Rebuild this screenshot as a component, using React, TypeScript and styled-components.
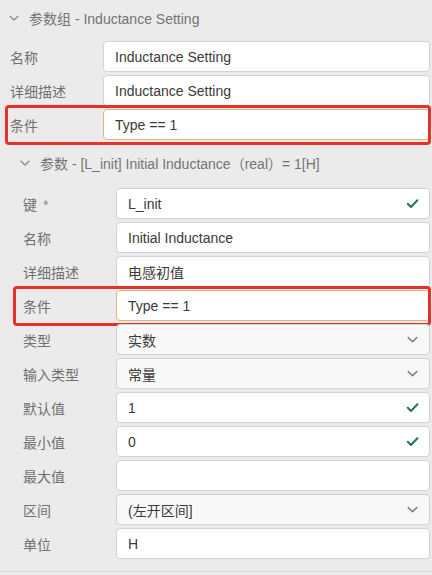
import React from "react";
import styled, { createGlobalStyle } from "styled-components";

/** Types */
type Field = {
  /** Label shown on the left. */
  label: string;
  /** Value in the box. */
  value: string;
  /** Marks the label as required. */
  required?: boolean;
  /** Box kind. */
  kind?: "text" | "select" | "valid";
  /** Draws the red review frame round the row. */
  flagged?: boolean;
  /** Input focused with warning border. */
  warn?: boolean;
};

const groupFields: Field[] = [
  { label: "名称", value: "Inductance Setting" },
  { label: "详细描述", value: "Inductance Setting" },
  { label: "条件", value: "Type == 1", flagged: true, warn: true },
];

const paramFields: Field[] = [
  { label: "键", value: "L_init", required: true, kind: "valid" },
  { label: "名称", value: "Initial Inductance" },
  { label: "详细描述", value: "电感初值" },
  { label: "条件", value: "Type == 1", flagged: true, warn: true },
  { label: "类型", value: "实数", kind: "select" },
  { label: "输入类型", value: "常量", kind: "select" },
  { label: "默认值", value: "1", kind: "valid" },
  { label: "最小值", value: "0", kind: "valid" },
  { label: "最大值", value: "" },
  { label: "区间", value: "(左开区间]", kind: "select" },
  { label: "单位", value: "H" },
];

/** Icons */
const Chevron = ({ color = "#8a8a8a", size = 12 }: { color?: string; size?: number }) => (
  <svg width={size} height={size} viewBox="0 0 12 12" fill="none">
    <path d="M2 4.2 L6 8 L10 4.2" stroke={color} strokeWidth="1.3" strokeLinecap="round" strokeLinejoin="round" />
  </svg>
);

const Check = () => (
  <svg width="13" height="13" viewBox="0 0 13 13" fill="none">
    <path d="M1.8 6.8 L5 10 L11.4 3.2" stroke="#23775a" strokeWidth="2" strokeLinecap="round" strokeLinejoin="round" />
  </svg>
);

/** Row */
const FieldRow = ({ field, inset }: { field: Field; inset: number }) => (
  <Row $inset={inset} $flagged={!!field.flagged}>
    <Label>
      {field.label}
      {field.required && <Star>*</Star>}
    </Label>
    <Box $select={field.kind === "select"} $warn={!!field.warn}>
      <Value>{field.value}</Value>
      {field.kind === "valid" && <Check />}
      {field.kind === "select" && <Chevron color="#777" size={13} />}
    </Box>
  </Row>
);

const App = () => (
  <>
    <GlobalStyle />
    <Panel>
      <GroupHeader $indent={8}>
        <Chevron />
        <HeaderText>参数组 - Inductance Setting</HeaderText>
      </GroupHeader>
      <Rows $left={5} $top={5}>
        {groupFields.map((f, i) => (
          <FieldRow key={i} field={f} inset={5} />
        ))}
      </Rows>
      <SubHeader $indent={19}>
        <Chevron />
        <HeaderText>参数 - [L_init] Initial Inductance（real）= 1[H]</HeaderText>
      </SubHeader>
      <Rows $left={13} $top={8}>
        {paramFields.map((f, i) => (
          <FieldRow key={i} field={f} inset={10} />
        ))}
      </Rows>
    </Panel>
  </>
);

/** Styles */
const GlobalStyle = createGlobalStyle`
  html, body {
    margin: 0;
    padding: 0;
    background: #ebebeb;
    font-family: "Liberation Sans", "Noto Sans CJK SC", sans-serif;
  }
`;

const Panel = styled.div`
  width: 432px;
  padding-bottom: 12px;
  border-bottom: 1px solid #d9d9d9;
  background: #ebebeb;
`;

const GroupHeader = styled.div<{ $indent: number }>`
  display: flex;
  align-items: center;
  gap: 9px;
  height: 36px;
  padding-left: ${(p) => p.$indent}px;
`;

const SubHeader = styled(GroupHeader)`
  height: 34px;
  margin-top: 6px;
`;

const HeaderText = styled.span`
  font-size: 14px;
  color: #747474;
  white-space: nowrap;
`;

const Rows = styled.div<{ $left: number; $top: number }>`
  display: flex;
  flex-direction: column;
  gap: 3px;
  margin: ${(p) => p.$top}px 2px 0 ${(p) => p.$left}px;
`;

const Row = styled.div<{ $inset: number; $flagged: boolean }>`
  position: relative;
  display: grid;
  grid-template-columns: 93px 1fr;
  align-items: center;
  height: 31px;
  padding-left: ${(p) => p.$inset}px;

  ${(p) =>
    p.$flagged &&
    `
    &::after {
      content: "";
      position: absolute;
      top: -4px;
      bottom: -5px;
      left: 0;
      right: -1px;
      border: 3px solid #e8302a;
      border-radius: 4px;
      pointer-events: none;
    }
  `}
`;

const Label = styled.span`
  font-size: 14px;
  color: #707070;
  white-space: nowrap;
`;

const Star = styled.span`
  margin-left: 6px;
  color: #8a8a8a;
`;

const Box = styled.div<{ $select: boolean; $warn: boolean }>`
  display: flex;
  align-items: center;
  justify-content: space-between;
  height: 31px;
  box-sizing: border-box;
  padding: 0 10px 0 11px;
  background: ${(p) => (p.$select ? "#f8f8f8" : "#fff")};
  border: 1px solid ${(p) => (p.$warn ? "#e2b27c" : "#d3d3d3")};
  border-radius: 4px;
`;

const Value = styled.span`
  font-size: 14px;
  color: #3a3a3a;
  white-space: nowrap;
`;

/** Exports */
export default App;
